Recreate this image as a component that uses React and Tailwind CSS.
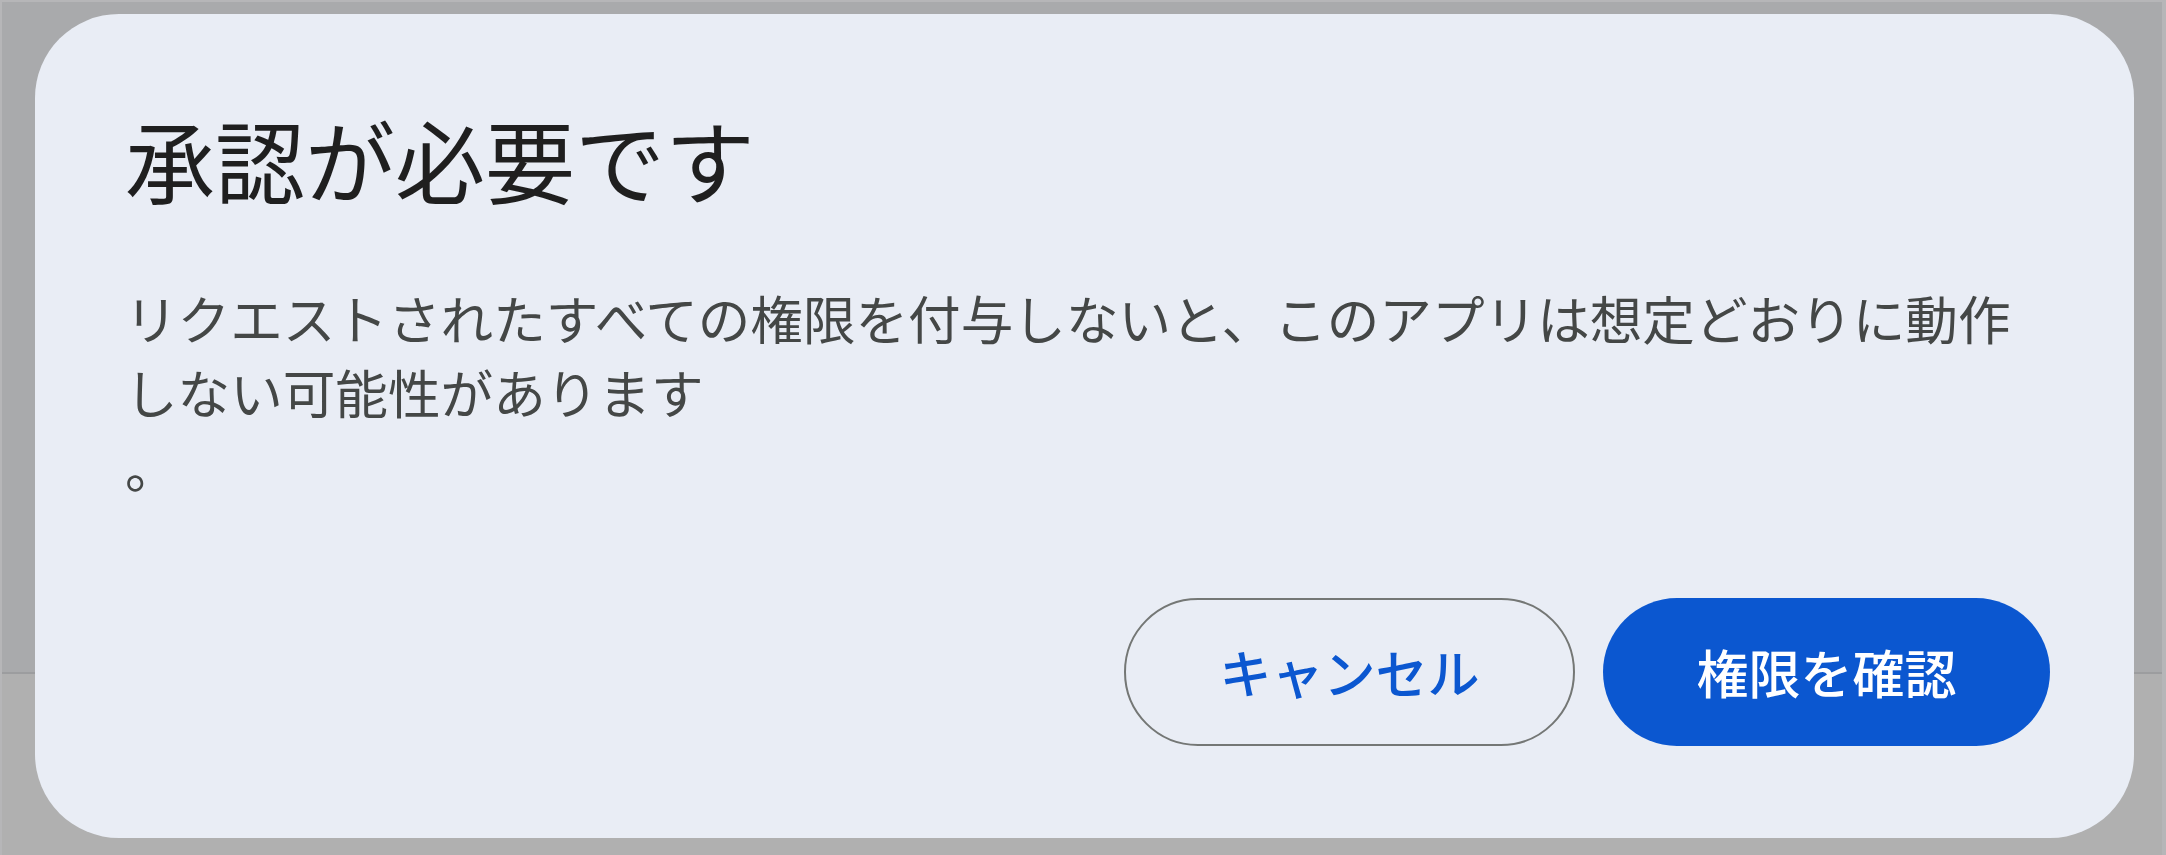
export default function App() {
  return (
    <div
      className="w-[2166px] h-[855px] overflow-hidden border-t-2 border-l-2 border-r-4 border-[#b6b6b8] bg-[linear-gradient(to_bottom,#a9aaac_670px,#9c9d9f_670px,#9c9d9f_672px,#b0b0b0_672px)] pt-[12px] pl-[33px] pr-[28px]"
      style={{ fontFamily: '"Noto Sans CJK JP", "Noto Sans", sans-serif' }}
    >
      <div className="w-[2099px] h-[824px] rounded-[84px] bg-[#e9edf5] pt-[90px] pl-[90px] pr-[84px] flex flex-col">
        <h1 className="text-[90px] leading-[1.2] font-normal text-[#1f1f1f]">承認が必要です</h1>
        <div className="mt-[68px] text-[52.6px] leading-[74px] text-[#444746]">
          <p className="whitespace-nowrap">リクエストされたすべての権限を付与しないと、このアプリは想定どおりに動作</p>
          <p className="whitespace-nowrap">しない可能性があります</p>
          <p className="whitespace-nowrap">。</p>
        </div>
        <div className="mt-[96px] flex justify-end gap-[28px]">
          <button className="h-[148px] w-[451px] rounded-full border-2 border-[#747775] text-[52px] font-medium text-[#0b57d0]">
            キャンセル
          </button>
          <button className="h-[148px] w-[447px] rounded-full bg-[#0b57d0] text-[52px] font-medium text-white">
            権限を確認
          </button>
        </div>
      </div>
    </div>
  );
}
